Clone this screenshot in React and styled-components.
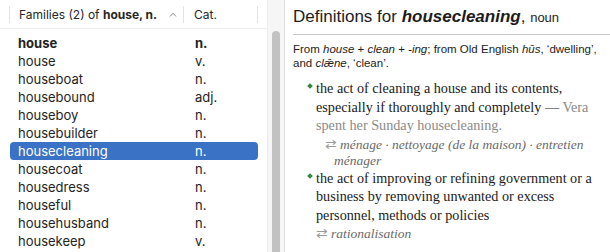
import React from "react";
import styled, { createGlobalStyle } from "styled-components";

const GlobalStyle = createGlobalStyle`
  html, body {
    margin: 0;
    padding: 0;
    background: #ffffff;
  }
  body {
    font-family: "Liberation Sans", Arial, sans-serif;
    -webkit-font-smoothing: antialiased;
  }
`;

const Window = styled.div`
  display: flex;
  width: 610px;
  height: 252px;
  overflow: hidden;
  background: #ffffff;
`;

const LeftPane = styled.div`
  display: flex;
  width: 284px;
  flex-shrink: 0;
  border-right: 1px solid #dcdcdc;
`;

const ListColumn = styled.div`
  display: flex;
  flex-direction: column;
  width: 267px;
`;

const Header = styled.div`
  display: flex;
  align-items: center;
  height: 28px;
  padding-left: 9px;
  font-family: Inter, "Liberation Sans", sans-serif;
  font-size: 12px;
  color: #262626;
`;

const HeaderCell = styled.div`
  display: flex;
  align-items: center;
  justify-content: space-between;
  width: ${(props) => props.width}px;
  height: 17px;
  padding: 0 6px 0 ${(props) => props.pad}px;
  box-sizing: border-box;
  border-left: 1px solid #e3e3e3;
  &:last-child {
    border-right: 1px solid #e3e3e3;
  }
`;

const Chevron = styled.svg`
  width: 8px;
  height: 5px;
  margin-top: 1px;
`;

const List = styled.div`
  flex: 1;
  padding-top: 5px;
  border-top: 1px solid #ececec;
  font-family: Inter, "Liberation Sans", sans-serif;
  font-size: 13px;
`;

const Row = styled.div`
  display: flex;
  align-items: center;
  height: 18px;
  margin-left: 10px;
  width: 248px;
  padding-left: 8px;
  box-sizing: border-box;
  border-radius: 4px;
  background: ${(props) => (props.selected ? "#3a72c5" : "transparent")};
  color: ${(props) => (props.selected ? "#ffffff" : "#232323")};
  font-weight: ${(props) => (props.bold ? 700 : 400)};
`;

const Word = styled.span`
  width: 177px;
`;

const Track = styled.div`
  flex: 1;
  display: flex;
  justify-content: center;
  background: #f6f6f6;
  border-left: 1px solid #ececec;
`;

const Thumb = styled.div`
  width: 8px;
  height: 240px;
  margin-top: 31px;
  border-radius: 4px;
  background: #c2c2c2;
`;

const RightPane = styled.div`
  flex: 1;
  min-width: 0;
  padding: 5px 0 0 8px;
  color: #1e1e1e;
`;

const Title = styled.div`
  font-family: "Liberation Sans", Arial, sans-serif;
  font-size: 17px;
  line-height: 24px;
  color: #1c1c1c;
  padding-bottom: 4px;
  border-bottom: 1px solid #c8c8c8;
  b {
    font-weight: 700;
    font-style: italic;
  }
`;

const Pos = styled.span`
  font-size: 13px;
`;

const Etymology = styled.div`
  font-family: "Liberation Sans", Arial, sans-serif;
  font-size: 11.5px;
  line-height: 14px;
  color: #222;
  margin-top: 7px;
  padding-right: 4px;
`;

const Senses = styled.div`
  padding: 9px 0 0 15px;
  font-family: "Liberation Serif", "Times New Roman", serif;
  white-space: nowrap;
`;

const Sense = styled.div`
  position: relative;
  padding-left: 8px;
  font-size: 14.2px;
  line-height: 18.5px;
  color: #1a1a1a;
`;

const Bullet = styled.span`
  position: absolute;
  left: 0;
  top: 5px;
  width: 4px;
  height: 4px;
  background: #2f8a3a;
  transform: rotate(45deg);
`;

const Example = styled.span`
  color: #8a8a8a;
`;

const Translation = styled.div`
  padding-left: ${(props) => props.indent}px;
  text-indent: -9px;
  font-style: italic;
  font-size: 13.5px;
  line-height: 16px;
  color: #6a6a6a;
  margin-top: 2px;
`;

const Arrow = styled.span`
  font-style: normal;
  color: #9a9a9a;
  margin-right: 3px;
`;

const words = [
  ["house", "n.", true],
  ["house", "v."],
  ["houseboat", "n."],
  ["housebound", "adj."],
  ["houseboy", "n."],
  ["housebuilder", "n."],
  ["housecleaning", "n.", false, true],
  ["housecoat", "n."],
  ["housedress", "n."],
  ["houseful", "n."],
  ["househusband", "n."],
  ["housekeep", "v."],
];

const App = () => {
  return (
    <Window>
      <GlobalStyle />
      <LeftPane>
        <ListColumn>
          <Header>
            <HeaderCell width={174} pad={9}>
              <span>
                Families (2) of <strong>house, n.</strong>
              </span>
              <Chevron viewBox="0 0 8 5">
                <path d="M1 4.5 L4 1.2 L7 4.5" fill="none" stroke="#8a8a8a" strokeWidth="1" />
              </Chevron>
            </HeaderCell>
            <HeaderCell width={75} pad={10}>
              Cat.
            </HeaderCell>
          </Header>
          <List>
            {words.map(([word, cat, bold, selected], i) => (
              <Row key={i} bold={bold} selected={selected}>
                <Word>{word}</Word>
                <span>{cat}</span>
              </Row>
            ))}
          </List>
        </ListColumn>
        <Track>
          <Thumb />
        </Track>
      </LeftPane>
      <RightPane>
        <Title>
          Definitions for <b>housecleaning</b>, <Pos>noun</Pos>
        </Title>
        <Etymology>
          From <i>house</i> + <i>clean</i> + <i>-ing</i>; from Old English{" "}
          <i>hūs</i>, ‘dwelling’, and <i>clǣne</i>, ‘clean’.
        </Etymology>
        <Senses>
          <Sense>
            <Bullet />
            the act of cleaning a house and its contents,
            <br />
            especially if thoroughly and completely — <Example>Vera</Example>
            <br />
            <Example>spent her Sunday housecleaning.</Example>
          </Sense>
          <Translation indent={26}>
            <Arrow>⇄</Arrow>ménage · nettoyage (de la maison) · entretien
            <br />
            ménager
          </Translation>
          <Sense>
            <Bullet />
            the act of improving or refining government or a
            <br />
            business by removing unwanted or excess
            <br />
            personnel, methods or policies
          </Sense>
          <Translation indent={17}>
            <Arrow>⇄</Arrow>rationalisation
          </Translation>
        </Senses>
      </RightPane>
    </Window>
  );
};

export default App;
